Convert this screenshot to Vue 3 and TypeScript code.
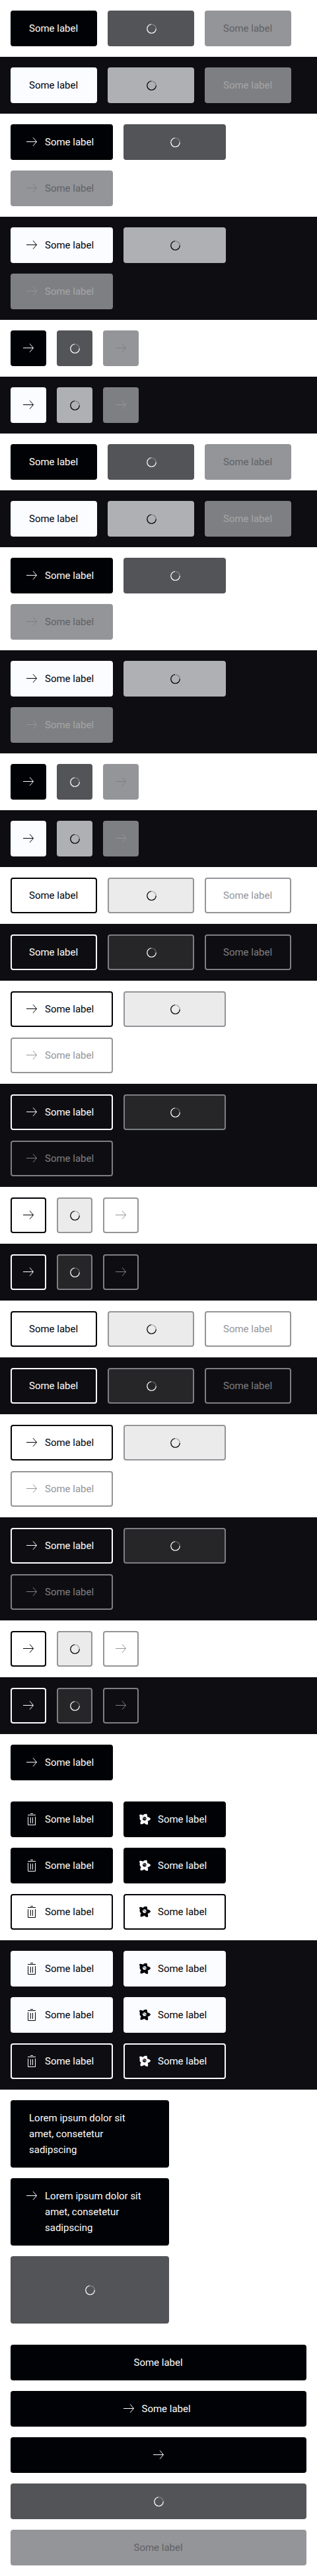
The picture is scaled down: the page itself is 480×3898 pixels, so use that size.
<script setup lang="ts">
type Theme = 'light' | 'dark'
type Variant = 'primary' | 'secondary'
type State = 'default' | 'loading' | 'disabled'
type Icon = 'arrow' | 'trash' | 'star' | 'none'
interface ButtonSpec {
  variant: Variant
  state: State
  icon: Icon
  label: string
  iconOnly?: boolean
}
interface Section {
  theme: Theme
  layout?: 'fixed' | 'block' | 'pairs'
  buttons: ButtonSpec[]
}

const label = 'Some label'
const longLabel = 'Lorem ipsum dolor sit\namet, consetetur\nsadipscing'
const states: State[] = ['default', 'loading', 'disabled']
const themes: Theme[] = ['light', 'dark']

const make = (variant: Variant, icon: Icon = 'none', state: State = 'default', iconOnly = false, text = label): ButtonSpec =>
  ({ variant, icon, state, iconOnly, label: text })

const group = (variant: Variant): Section[] => {
  const kinds: [Icon, boolean][] = [['none', false], ['arrow', false], ['arrow', true]]
  return kinds.flatMap(([icon, only]) =>
    themes.map((theme): Section => ({ theme, buttons: states.map((s) => make(variant, icon, s, only)) })),
  )
}

const iconPairs = (): ButtonSpec[] =>
  (['primary', 'primary', 'secondary'] as Variant[]).flatMap((v) => [make(v, 'trash'), make(v, 'star')])

const sections: Section[] = [
  ...group('primary'),
  ...group('primary'),
  ...group('secondary'),
  ...group('secondary'),
  { theme: 'light', buttons: [make('primary', 'arrow')] },
  { theme: 'light', layout: 'pairs', buttons: iconPairs() },
  { theme: 'dark', layout: 'pairs', buttons: iconPairs() },
  {
    theme: 'light',
    layout: 'fixed',
    buttons: [
      make('primary', 'none', 'default', false, longLabel),
      make('primary', 'arrow', 'default', false, longLabel),
      make('primary', 'none', 'loading', false, longLabel),
    ],
  },
  {
    theme: 'light',
    layout: 'block',
    buttons: [
      make('primary'),
      make('primary', 'arrow'),
      make('primary', 'arrow', 'default', true),
      make('primary', 'none', 'loading'),
      make('primary', 'none', 'disabled'),
    ],
  },
]
</script>

<template>
  <main class="page">
    <section v-for="(section, i) in sections" :key="i" class="section" :class="[section.theme, section.layout]">
      <button
        v-for="(b, j) in section.buttons"
        :key="j"
        type="button"
        class="btn"
        :class="[b.variant, b.state, { 'has-icon': b.icon !== 'none', 'icon-only': b.iconOnly }]"
        :disabled="b.state === 'disabled'"
        :aria-busy="b.state === 'loading'"
        :aria-label="b.iconOnly || b.state === 'loading' ? b.label : undefined"
      >
        <svg v-if="b.icon === 'arrow'" class="icon" viewBox="0 0 24 24" aria-hidden="true">
          <path d="M4 11.5h15.5M14 5.2l5.5 6.3-5.500 6.300" class="line" />
        </svg>
        <svg v-else-if="b.icon === 'trash'" class="icon" viewBox="0 0 24 24" aria-hidden="true">
          <path d="M10 3.5h4M6 5.5h12M6.500 8v12.500h11V8M10.500 9v9M13.500 9v9" class="line" />
        </svg>
        <svg v-else-if="b.icon === 'star'" class="icon" viewBox="0 0 24 24" aria-hidden="true">
          <path
            fill="currentColor"
            fill-rule="evenodd"
            d="M4.200 5.200C5.800 4.500 7.800 4.900 9.400 6 10.800 4.400 13 3.500 15.300 4c.7 1.300.9 2.800.7 4.300 2 .2 3.900 1.200 5.200 2.900-1 1.800-2.700 3-4.700 3.300.9 1.700 1 3.700.2 5.500-2.100.3-4-.6-5.200-2.400-1.400 1.400-3.500 2.100-5.800 1.700-.5-1.700-.2-3.600.9-5.100C4.600 12.600 4 10.400 4.900 8.400 4.200 7.400 4 6.200 4.200 5.200ZM11.800 8.200a2.800 2.800 0 1 0 .01 0Z"
          />
          <path fill="currentColor" d="M10.200 9.500h1.300v1.200h-1.300zM12.300 10.500h1.200v1.300h-1.200z" />
        </svg>
        <span v-if="!b.iconOnly" class="label">{{ b.label }}</span>
        <span v-if="b.state === 'loading'" class="spinner">
          <svg class="icon" viewBox="0 0 24 24" aria-hidden="true">
            <circle cx="12.500" cy="12.500" r="6.750" class="track" />
            <path d="M19.250 12.500A6.750 6.750 0 1 1 12 5.770" class="arc" />
          </svg>
        </span>
      </button>
    </section>
  </main>
</template>

<style>
body {
  margin: 0;
  background: #fff;
}
</style>

<style scoped>
.page {
  font-family: Roboto, "Liberation Sans", sans-serif;
}
.section {
  display: flex;
  flex-wrap: wrap;
  gap: 16px;
  padding: 16px;
}
.light {
  --solid: #010205;
  --solid-loading: #535457;
  --on-solid: #fbfcff;
  --on-solid-disabled: #606164;
  --icon-disabled: #7d7e82;
  --muted: #949598;
  --ghost-loading: #ebebeb;
  background: #fff;
}
.dark {
  --solid: #fbfcff;
  --solid-loading: #afb0b4;
  --on-solid: #010205;
  --on-solid-disabled: #a5a6a9;
  --icon-disabled: #949598;
  --muted: #7e7f82;
  --ghost-loading: #262628;
  background: #0e0e12;
}
.pairs {
  display: grid;
  grid-template-columns: max-content max-content;
}
.fixed,
.block {
  flex-direction: column;
}
.fixed .btn {
  width: 240px;
  justify-content: flex-start;
}
.btn {
  position: relative;
  display: flex;
  justify-content: center;
  align-items: flex-start;
  gap: 8px;
  box-sizing: border-box;
  min-height: 54px;
  margin: 0;
  padding: 13px 26px;
  border: 2px solid var(--solid);
  border-radius: 4px;
  background: var(--solid);
  color: var(--on-solid);
  font-family: inherit;
  font-size: 15px;
  line-height: 24px;
  text-align: left;
  cursor: pointer;
}
.has-icon {
  padding-left: 18px;
}
.icon-only {
  padding: 13px;
}
.label {
  min-width: 75px;
  white-space: pre-line;
}
.primary.loading {
  border-color: var(--solid-loading);
  background: var(--solid-loading);
}
.primary.disabled {
  border-color: var(--muted);
  background: var(--muted);
  color: var(--on-solid-disabled);
}
.primary.disabled .icon {
  color: var(--icon-disabled);
}
.secondary {
  background: transparent;
  color: var(--solid);
}
.secondary.loading {
  border-color: var(--muted);
  background: var(--ghost-loading);
}
.secondary.disabled {
  border-color: var(--muted);
  color: var(--muted);
}
.disabled {
  cursor: not-allowed;
}
.loading > .label,
.loading > .icon {
  visibility: hidden;
}
.icon {
  display: block;
  flex: none;
  width: 24px;
  height: 24px;
}
.line {
  fill: none;
  stroke: currentColor;
  stroke-width: 1;
}
.spinner {
  position: absolute;
  inset: 0;
  display: grid;
  place-items: center;
}
.track,
.arc {
  fill: none;
  stroke: currentColor;
  stroke-width: 1.2;
}
.track {
  opacity: 0.3;
}
</style>
